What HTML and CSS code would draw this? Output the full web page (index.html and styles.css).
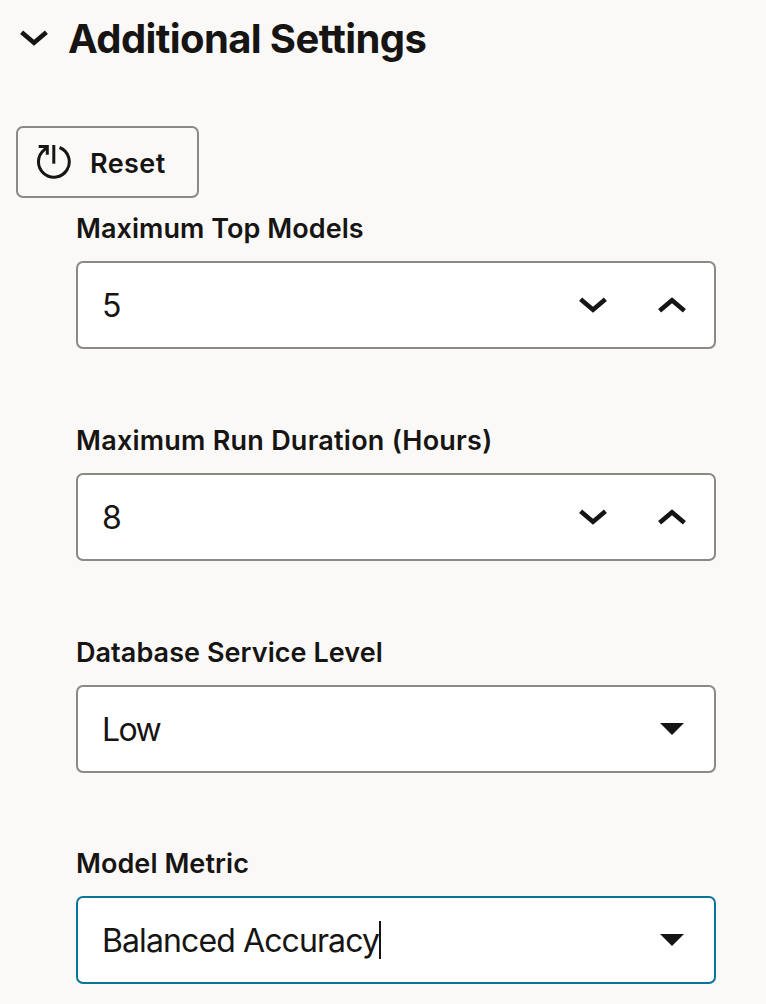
FILE: index.html
```html
<!DOCTYPE html>
<html lang="en">

<head>
    <meta charset="UTF-8">
    <meta name="viewport" content="width=device-width, initial-scale=1.0">
    <title>Additional Settings</title>
    <link rel="stylesheet" href="styles.css">
</head>

<body>
    <div class="settings-header">
        <svg class="collapse-icon" width="28" height="18" viewBox="0 0 28 18">
            <path d="M1.6 3.2 L14 13.7 L26.4 3.2" />
        </svg>
        <h2>Additional Settings</h2>
    </div>

    <button type="button" class="reset-btn">
        <svg class="reset-icon" width="36" height="36" viewBox="0 0 36 36">
            <path d="M23.6 3.5 A15.4 15.4 0 1 1 8.2 5.8 L11 3.2" />
            <path d="M2.7 2.4 H11.3 V10.8" />
            <path d="M17.8 1 V19.7" />
        </svg>
        <span class="reset-text">Reset</span>
    </button>

    <form class="settings-form">
        <div class="field">
            <label for="maxModels" class="input-label">Maximum Top Models</label>
            <div class="input-box">
                <input type="text" id="maxModels" class="input-field" value="5">
                <svg class="chevron" width="28" height="18" viewBox="0 0 28 18">
                    <path d="M1.6 3.2 L14 13.7 L26.4 3.2" />
                </svg>
                <svg class="chevron" width="28" height="18" viewBox="0 0 28 18">
                    <path d="M1.6 14.8 L14 4.3 L26.4 14.8" />
                </svg>
            </div>
        </div>
        <div class="field">
            <label for="maxDuration" class="input-label wide">Maximum Run Duration (Hours)</label>
            <div class="input-box">
                <input type="text" id="maxDuration" class="input-field" value="8">
                <svg class="chevron" width="28" height="18" viewBox="0 0 28 18">
                    <path d="M1.6 3.2 L14 13.7 L26.4 3.2" />
                </svg>
                <svg class="chevron" width="28" height="18" viewBox="0 0 28 18">
                    <path d="M1.6 14.8 L14 4.3 L26.4 14.8" />
                </svg>
            </div>
        </div>
        <div class="field">
            <div class="input-label">Database Service Level</div>
            <div class="input-box">
                <span class="select-value short">Low</span>
                <svg class="arrow" width="24" height="12" viewBox="0 0 24 12">
                    <path d="M0 0 H24 L12 12 Z" />
                </svg>
            </div>
        </div>
        <div class="field">
            <div class="input-label">Model Metric</div>
            <div class="input-box active">
                <span class="select-value">Balanced Accuracy</span>
                <span class="caret"></span>
                <svg class="arrow" width="24" height="12" viewBox="0 0 24 12">
                    <path d="M0 0 H24 L12 12 Z" />
                </svg>
            </div>
        </div>
    </form>
</body>

</html>
```
FILE: styles.css
```css
body {
    font-family: Inter, Arial, sans-serif;
    background-color: #fbf9f8;
    color: #161513;
    margin: 0;
    padding: 15px 16px 0;
}

svg {
    flex: none;
    fill: none;
    stroke: #161513;
    stroke-width: 4.6;
}

.settings-header {
    display: flex;
    align-items: center;
    gap: 20px;
    height: 48px;
    padding-left: 4px;
}

.collapse-icon {
    margin-bottom: 2px;
}

h2 {
    margin: 0;
    font-size: 40px;
    line-height: 48px;
    font-weight: 700;
    letter-spacing: -0.62px;
}

.reset-btn {
    display: flex;
    align-items: center;
    gap: 18px;
    width: 183px;
    height: 72px;
    margin-top: 63px;
    padding: 0 0 0 18px;
    border: 2px solid #8b8986;
    border-radius: 7px;
    background: none;
    color: #161513;
    font-family: inherit;
    font-size: 27px;
    font-weight: 600;
    letter-spacing: 0.4px;
}

.reset-icon {
    stroke-width: 3;
}

.reset-text {
    padding-top: 2px;
}

.settings-form {
    width: 640px;
    margin: 15px 0 0 60px;
}

.field {
    height: 212px;
}

.field:nth-child(3) {
    height: 211px;
}

.field:last-child {
    height: auto;
}

.input-label {
    display: block;
    height: 48px;
    font-size: 27px;
    line-height: 32px;
    font-weight: 600;
    letter-spacing: 0.06px;
}

.input-label.wide {
    letter-spacing: 0.24px;
}

.input-box {
    display: flex;
    align-items: center;
    height: 88px;
    padding: 0 28px 0 24px;
    border: 2px solid #8b8986;
    border-radius: 7px;
    background-color: #ffffff;
    box-sizing: border-box;
    font-size: 32px;
    letter-spacing: -0.9px;
}

.input-box.active {
    border-color: #0b749b;
}

.input-field {
    flex: 1;
    min-width: 0;
    padding: 1px 0 0;
    border: none;
    outline: none;
    color: inherit;
    font: inherit;
}

.select-value {
    padding-top: 1px;
}

.select-value.short {
    letter-spacing: -1.6px;
}

.chevron + .chevron {
    margin-left: 51px;
}

.arrow {
    margin: 0 2px 0 auto;
    fill: #161513;
    stroke: none;
}

.caret {
    width: 2px;
    height: 38px;
    background-color: #161513;
}
```
